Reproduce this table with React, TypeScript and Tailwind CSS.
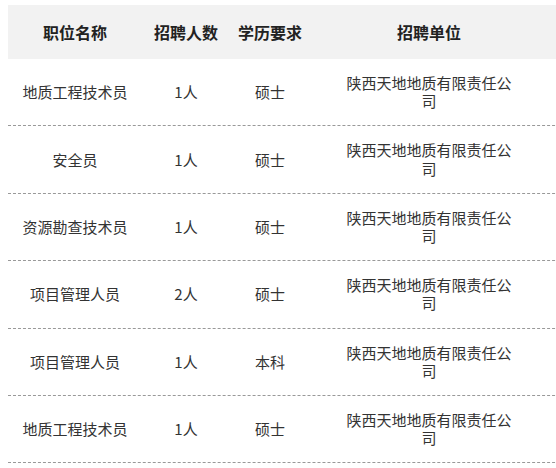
const rows = [
  { title: "地质工程技术员", count: "1人", edu: "硕士" },
  { title: "安全员", count: "1人", edu: "硕士" },
  { title: "资源勘查技术员", count: "1人", edu: "硕士" },
  { title: "项目管理人员", count: "2人", edu: "硕士" },
  { title: "项目管理人员", count: "1人", edu: "本科" },
  { title: "地质工程技术员", count: "1人", edu: "硕士" },
];

const company = "陕西天地地质有限责任公司";

const App = () => {
  return (
    <div
      className="w-full h-[468px] overflow-hidden bg-white"
      style={{ fontFamily: '"Noto Sans CJK SC", "Noto Sans", sans-serif' }}
    >
      <div className="w-[600px] pl-2 pt-[5px]">
        {/* Header */}
        <div className="flex h-[54px] items-center bg-[#f2f2f2] text-[16px] font-bold text-[#222]">
          <div className="w-[134px] text-center">职位名称</div>
          <div className="w-[88px] text-center">招聘人数</div>
          <div className="w-[80px] text-center">学历要求</div>
          <div className="w-[238px] text-center">招聘单位</div>
        </div>

        {/* Rows */}
        {rows.map((row, i) => (
          <div
            key={i}
            className="flex items-center border-b border-dashed border-[#999] py-[15px] text-[15px] leading-[18.2px] text-[#333]"
          >
            <div className="w-[134px] text-center">{row.title}</div>
            <div className="w-[88px] text-center">{row.count}</div>
            <div className="w-[80px] text-center">{row.edu}</div>
            <div className="w-[238px] px-[34px] text-center">{company}</div>
          </div>
        ))}
      </div>
    </div>
  );
};

export default App;
